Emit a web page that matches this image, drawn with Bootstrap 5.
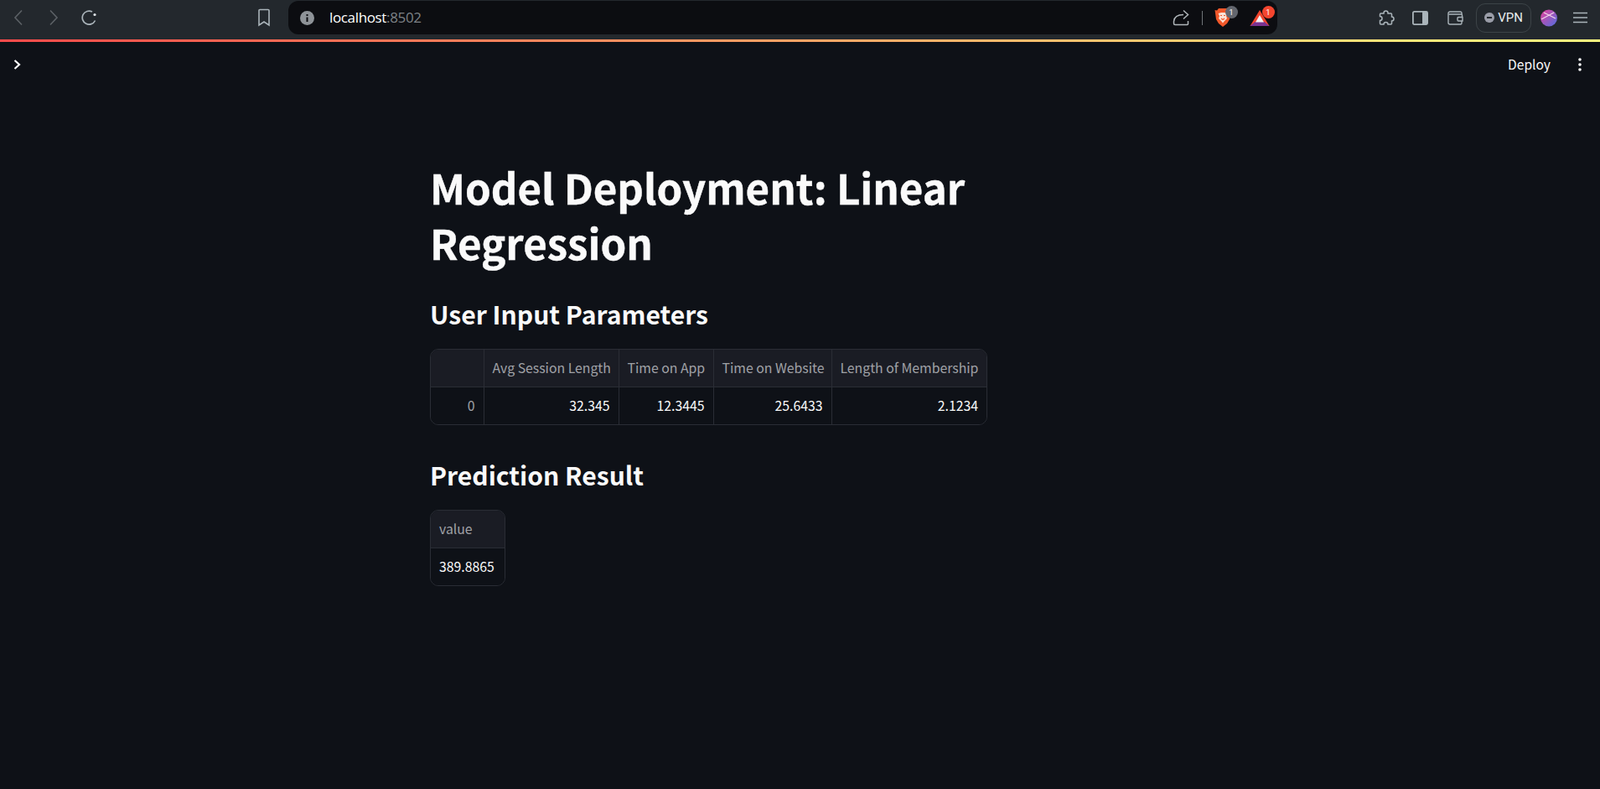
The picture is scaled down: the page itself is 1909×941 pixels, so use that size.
<!DOCTYPE html>
<html lang="en">
<head>
    <meta charset="UTF-8">
    <title>Model Deployment: Linear Regression</title>
    <meta name="viewport" content="width=device-width, initial-scale=1">
    <link href="https://cdn.jsdelivr.net/npm/bootstrap@5.3.2/dist/css/bootstrap.min.css" rel="stylesheet">
    <style>
        html, body { height: 100%; }
        body {
            background-color: #0e1117;
            color: #fafafa;
            font-family: "Noto Sans CJK SC", "Noto Sans", sans-serif;
            overflow: hidden;
        }

        /* browser toolbar */
        .browser-bar { height: 47px; background-color: #23282d; padding-top: 1px; padding-bottom: 6px; }
        .tool-icon { flex: none; display: block; }
        .tool-nav { flex: none; width: 344px; padding-left: 15px; padding-right: 21px; }
        .nav-forward { margin-left: 28px; }
        .nav-reload { margin-left: 26px; }
        .nav-mark { margin-left: auto; }
        .url-box { flex: none; width: 1180px; background-color: #0c0d11; border-radius: 12px; padding: 0 9px 0 14px; }
        .url-text { font-family: "Open Sans", sans-serif; font-size: 17px; margin-left: 18px; color: #fff; letter-spacing: -.35px; }
        .url-port { color: #7d8186; }
        .url-sep { width: 1px; height: 17px; background-color: #6e7377; margin: 0 14px 0 15px; }
        .shield-wrap { position: relative; width: 26px; margin-right: 16px; }
        .bat-wrap { position: relative; width: 24px; }
        .count-badge {
            position: absolute; top: -2px; right: -1.5px;
            min-width: 15px; height: 15px; border-radius: 50%;
            font-family: "Roboto", sans-serif; font-size: 9.5px; line-height: 15px; text-align: center; color: #fff;
        }
        .count-grey { background-color: #63666e; }
        .count-red { background-color: #f4452e; top: -4px; right: -5.5px; }
        .tool-right { flex: 1 1 auto; padding-right: 15.5px; }
        .gap-side { margin-left: 21px; }
        .gap-wallet { margin-left: 23px; }
        .gap-avatar { margin-left: 11px; }
        .gap-menu { margin-left: 18.5px; }
        .vpn-pill {
            width: 66px; height: 35px; margin-left: 15px;
            border: 1px solid #3c4347; border-radius: 11px;
            font-family: "Roboto", sans-serif; font-size: 15px; color: #e9ecef; gap: 4px;
        }
        .vpn-dot { width: 12px; height: 12px; border-radius: 50%; background-color: #9a9da8; position: relative; }
        .vpn-dot::after { content: ""; position: absolute; left: 3px; right: 3px; top: 5px; height: 2px; background-color: #23282d; }
        .top-gradient { height: 3px; background: linear-gradient(90deg, #ff4b4b, #fffd80); }

        /* streamlit header */
        .app-head { height: 54px; padding: 0 22px 0 15px; }
        .deploy-text { font-size: 15.6px; color: #fafafa; margin-right: 33px; }

        /* main column */
        .app-main { width: 883px; padding-top: 86px; }
        .app-title { font-size: 49.2px; font-weight: 700; line-height: 66px; margin: 0 0 28px; color: #fafafa; -webkit-text-stroke: .4px #fafafa; }
        .app-sub { font-size: 30.1px; font-weight: 600; line-height: 48px; margin: 0 0 18px; color: #fafafa; }
        .result-sub { margin-top: 35px; margin-bottom: 18px; }

        .frame-box { border: 1px solid #2a2d35; border-radius: 10px; overflow: hidden; }
        .frame-wide { width: 665px; }
        .frame-narrow { width: 90px; }
        .frame-table { table-layout: fixed; width: 100%; margin: 0; font-size: 15.8px; }
        .frame-table th, .frame-table td {
            height: 45px; padding: 0 10px; line-height: 1;
            border: 0 solid #2a2d35; border-right-width: 1px; vertical-align: middle;
            background-color: #0e1117; color: #fafafa; font-weight: 400; white-space: nowrap;
        }
        .frame-table th:last-child, .frame-table td:last-child { border-right-width: 0; }
        .frame-table thead th { height: 44px; background-color: #1a1c24; color: #a0a2a7; border-bottom-width: 1px; }
        .frame-table .idx-cell { color: #a0a2a7; }
        .w-idx { width: 63px; }
        .w-a { width: 161px; }
        .w-b { width: 113px; }
        .w-c { width: 141px; }
        .w-d { width: 185px; }
    </style>
</head>
<body>

    <!-- browser toolbar -->
    <div class="browser-bar d-flex align-items-stretch">
        <div class="tool-nav d-flex align-items-center">
            <svg class="tool-icon" width="14" height="20" viewBox="0 0 14 20" fill="none" stroke="#5c6166" stroke-width="1.6"><path d="M11 1.500 3 10l8 8.500"/></svg>
            <svg class="tool-icon nav-forward" width="14" height="20" viewBox="0 0 14 20" fill="none" stroke="#5c6166" stroke-width="1.6"><path d="M3 1.500 11 10l-8 8.500"/></svg>
            <svg class="tool-icon nav-reload" width="20" height="20" viewBox="0 0 20 20" fill="none" stroke="#aab4ba" stroke-width="1.700"><path d="M16.500 13.500A8 8 0 1 1 13 3"/><circle cx="16" cy="6.500" r="1.600" fill="#dfe5e8" stroke="none"/></svg>
            <svg class="tool-icon nav-mark" width="16" height="22" viewBox="0 0 16 22" fill="none" stroke="#aab4ba" stroke-width="1.600"><path d="M2 2.500a1 1 0 0 1 1-1h10a1 1 0 0 1 1 1v17.500l-6-4-6 4z"/></svg>
        </div>
        <div class="url-box d-flex align-items-center">
            <svg class="tool-icon" width="17" height="17" viewBox="0 0 17 17"><circle cx="8.500" cy="8.500" r="8.500" fill="#8e9398"/><rect x="7.500" y="7.500" width="2" height="5.500" fill="#0c0d11"/><rect x="7.500" y="4" width="2" height="2" fill="#0c0d11"/></svg>
            <span class="url-text">localhost<span class="url-port">:8502</span></span>
            <div class="ms-auto d-flex align-items-center">
                <svg class="tool-icon" width="20" height="20" viewBox="0 0 20 20" fill="none" stroke="#b0b6ba" stroke-width="1.500"><path d="M1.500 14.500C2 9 6 6.500 13 6.500M13 1.500l5.500 5-5.500 5M18.500 14v3.500a1 1 0 0 1-1 1H3a1.500 1.500 0 0 1-1.500-1.500v-2.500"/></svg>
                <div class="url-sep"></div>
                <div class="shield-wrap">
                    <svg class="tool-icon" width="20" height="24" viewBox="0 0 20 24"><path d="M5 1h10l2 2.500 2.500-.5-1.500 11-3 5-5 4-5-4-3-5L.5 3 3 3.500z" fill="#f1582a"/><path d="M4.500 7 8 6h4l3.500 1-1.500 3 1 3-3.500 3.500-1.500 2-1.500-2L5 13l1-3z" fill="#fbe3d6"/><path d="M7 9.500h2M11 9.500h2M8 13l2 1.500 2-1.500" stroke="#f1582a" stroke-width="1.200" fill="none"/></svg>
                    <span class="count-badge count-grey">1</span>
                </div>
                <div class="bat-wrap">
                    <svg class="tool-icon" width="24" height="21" viewBox="0 0 24 21"><path d="M12 1 23.500 20H.5z" fill="#f1442c"/><path d="M.5 20 6.500 15h11l6 5z" fill="#7a3290"/><path d="M12 7 17 15.500H7z" fill="#f6f1f3"/></svg>
                    <span class="count-badge count-red">1</span>
                </div>
            </div>
        </div>
        <div class="tool-right d-flex align-items-center justify-content-end">
            <svg class="tool-icon" width="20" height="20" viewBox="0 0 20 20" fill="none" stroke="#aab4ba" stroke-width="1.500"><path d="M7 4.500a2.500 2.500 0 0 1 5 0v.5h3.500a1 1 0 0 1 1 1V9a2.500 2.500 0 0 1 0 5v3a1 1 0 0 1-1 1H12a2.500 2.500 0 0 0-5 0H3.500a1 1 0 0 1-1-1v-3.500a2.500 2.500 0 0 0 0-5V6a1 1 0 0 1 1-1H7z"/></svg>
            <svg class="tool-icon gap-side" width="19" height="17" viewBox="0 0 19 17"><rect x=".9" y=".9" width="17.200" height="15.200" rx="1.500" fill="none" stroke="#aab4ba" stroke-width="1.800"/><rect x="12" y="1" width="6" height="15" fill="#aab4ba"/></svg>
            <svg class="tool-icon gap-wallet" width="19" height="17" viewBox="0 0 19 17" fill="none" stroke="#aab4ba" stroke-width="1.400"><path d="M17 4V2.500a1.500 1.500 0 0 0-1.500-1.500H3a2 2 0 0 0-2 2v11a2 2 0 0 0 2 2h12.500a1.500 1.500 0 0 0 1.500-1.500V12"/><path d="M1.500 4H16.500a1 1 0 0 1 1 1v2M18 7.500h-5a1 1 0 0 0-1 1V11a1 1 0 0 0 1 1h5z"/></svg>
            <div class="vpn-pill d-flex align-items-center justify-content-center"><span class="vpn-dot"></span>VPN</div>
            <svg class="tool-icon gap-avatar" width="20" height="21" viewBox="0 0 20 21"><defs><linearGradient id="avatarFill" x1="0" y1="0" x2="1" y2="1"><stop offset="0" stop-color="#e8409a"/><stop offset="1" stop-color="#4f6fe0"/></linearGradient></defs><circle cx="10" cy="10.500" r="10" fill="url(#avatarFill)"/><path d="M4 4l14 7M1 12 16 4" stroke="#f4d8ea" stroke-width="1.100"/></svg>
            <svg class="tool-icon gap-menu" width="17" height="14" viewBox="0 0 17 14" stroke="#aab4ba" stroke-width="1.500"><path d="M0 1.500h17M0 7h17M0 12.500h17"/></svg>
        </div>
    </div>
    <div class="top-gradient"></div>

    <!-- app header -->
    <div class="app-head d-flex align-items-center">
        <svg class="tool-icon" width="12" height="14" viewBox="0 0 12 14" fill="none" stroke="#fafafa" stroke-width="2.200"><path d="M2.500 2 8 7l-5.500 5"/></svg>
        <span class="deploy-text ms-auto">Deploy</span>
        <svg class="tool-icon" width="4" height="16" viewBox="0 0 4 16" fill="#fafafa"><circle cx="2" cy="2" r="1.800"/><circle cx="2" cy="8" r="1.800"/><circle cx="2" cy="14" r="1.800"/></svg>
    </div>

    <main class="app-main mx-auto">
        <h1 class="app-title">Model Deployment: Linear Regression</h1>
        <h2 class="app-sub">User Input Parameters</h2>
        <div class="frame-box frame-wide">
            <table class="frame-table">
                <colgroup>
                    <col class="w-idx"><col class="w-a"><col class="w-b"><col class="w-c"><col class="w-d">
                </colgroup>
                <thead>
                    <tr>
                        <th></th>
                        <th>Avg Session Length</th>
                        <th>Time on App</th>
                        <th>Time on Website</th>
                        <th>Length of Membership</th>
                    </tr>
                </thead>
                <tbody>
                    <tr>
                        <td class="idx-cell text-end">0</td>
                        <td class="text-end">32.345</td>
                        <td class="text-end">12.3445</td>
                        <td class="text-end">25.6433</td>
                        <td class="text-end">2.1234</td>
                    </tr>
                </tbody>
            </table>
        </div>
        <h2 class="app-sub result-sub">Prediction Result</h2>
        <div class="frame-box frame-narrow">
            <table class="frame-table">
                <thead><tr><th>value</th></tr></thead>
                <tbody><tr><td>389.8865</td></tr></tbody>
            </table>
        </div>
    </main>

    <script src="https://cdn.jsdelivr.net/npm/bootstrap@5.3.2/dist/js/bootstrap.bundle.min.js"></script>
</body>
</html>
